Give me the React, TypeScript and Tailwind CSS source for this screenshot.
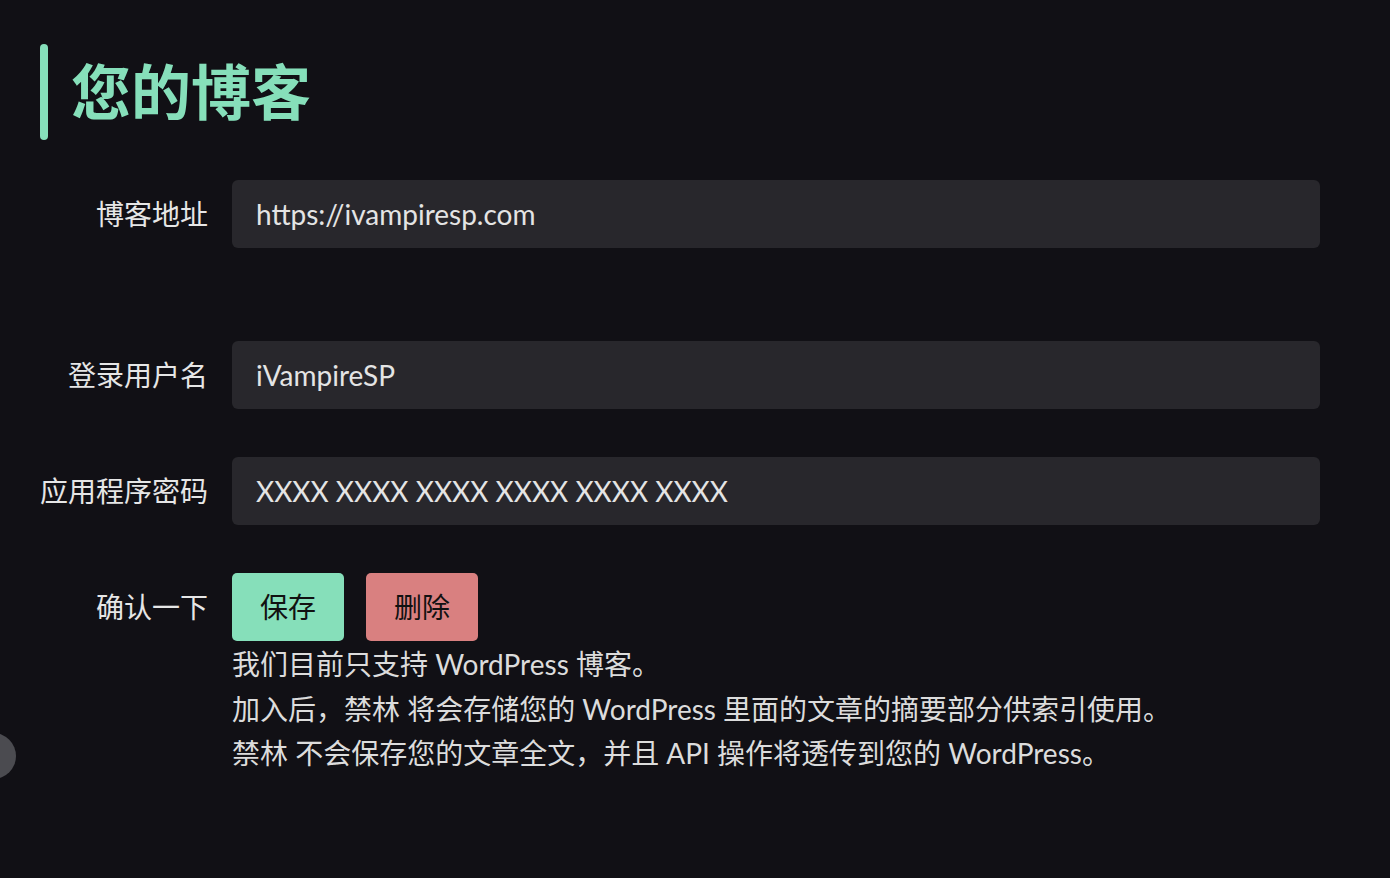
import React from "react";

const font = { fontFamily: 'Lato, "Noto Sans CJK SC", sans-serif' };

function Row({ label, children, className = "" }: { label: string; children: React.ReactNode; className?: string }) {
  return (
    <div className={`flex items-center ${className}`}>
      <div className="w-[208px] shrink-0 text-right text-[28px] text-[#e6e6e6] leading-none">{label}</div>
      <div className="ml-[24px] flex-1">{children}</div>
    </div>
  );
}

function Input({ value }: { value: string }) {
  return (
    <div className="h-[68px] w-full rounded-[6px] bg-[#28272c] px-[24px] flex items-center text-[28px] text-[#e4e4e4]">
      {value}
    </div>
  );
}

export default function App() {
  return (
    <div className="relative min-h-[878px] w-full overflow-hidden bg-[#111015]" style={font}>
      <div className="pt-[44px] pl-[40px] pr-[70px]">
        <div className="flex items-center h-[96px]">
          <div className="w-[8px] h-[96px] rounded-full bg-[#86dfba]" />
          <h1 className="ml-[23px] text-[60px] font-bold text-[#86dfba] leading-none">您的博客</h1>
        </div>
        <div className="mt-[40px] ml-[-40px]">
          <Row label="博客地址" className="mb-[93px]">
            <Input value="https://ivampiresp.com" />
          </Row>
          <Row label="登录用户名" className="mb-[48px]">
            <Input value="iVampireSP" />
          </Row>
          <Row label="应用程序密码" className="mb-[48px]">
            <Input value="XXXX XXXX XXXX XXXX XXXX XXXX" />
          </Row>
          <Row label="确认一下">
            <div className="flex gap-[22px]">
              <button className="h-[68px] w-[112px] rounded-[5px] bg-[#86dfba] text-[28px] text-[#111111]">保存</button>
              <button className="h-[68px] w-[112px] rounded-[5px] bg-[#d98080] text-[28px] text-[#111111]">删除</button>
            </div>
          </Row>
          <div className="ml-[232px] mt-[1px] text-[28px] leading-[44.5px] text-[#dcdcdc]">
            <div>我们目前只支持 WordPress 博客。</div>
            <div>加入后，禁林 将会存储您的 WordPress 里面的文章的摘要部分供索引使用。</div>
            <div>禁林 不会保存您的文章全文，并且 API 操作将透传到您的 WordPress。</div>
          </div>
        </div>
      </div>
      <div className="absolute left-[-30px] top-[733px] h-[46px] w-[46px] rounded-full bg-[#4b4b50]" />
    </div>
  );
}
